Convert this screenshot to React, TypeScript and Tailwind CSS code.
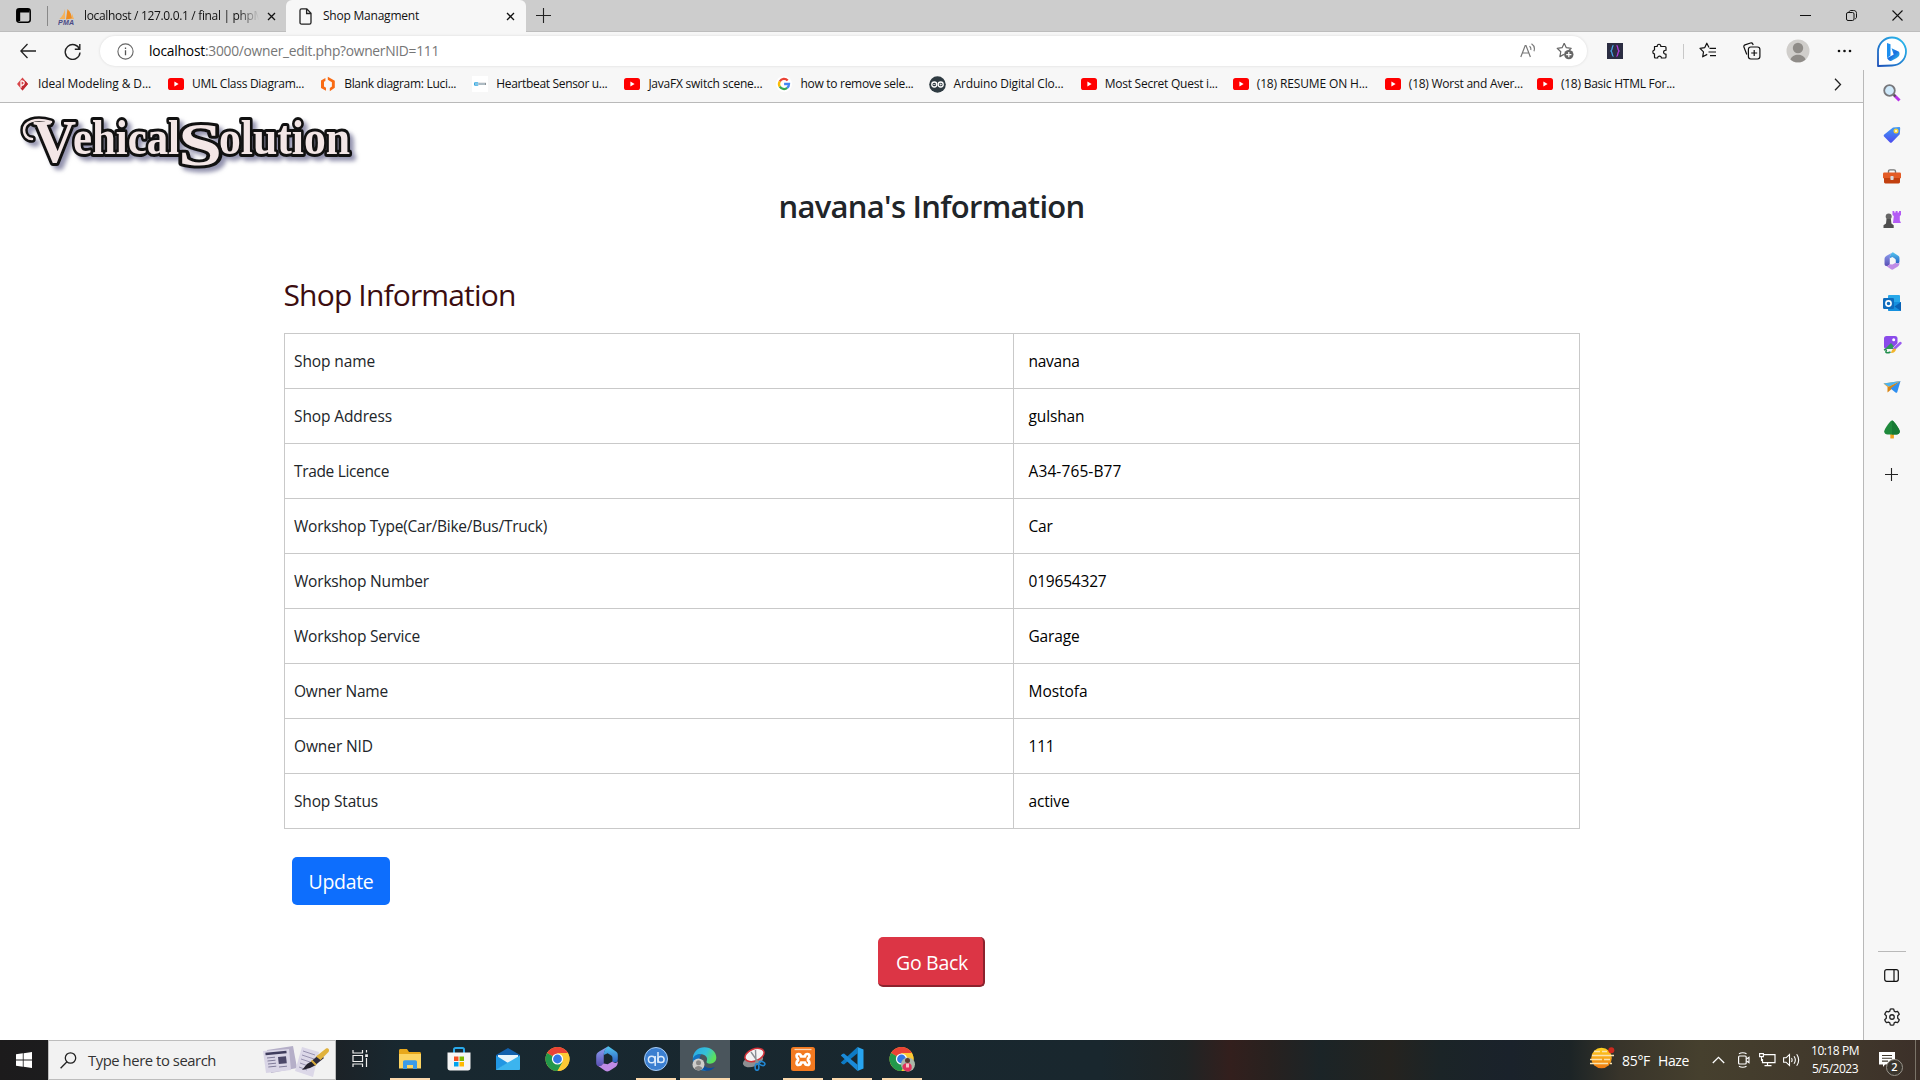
import React, { useLayoutEffect, useRef, useState } from 'react';

/* Single line of text tracked so that it fills exactly `w` pixels. */
function Fit({ w, children, className = '' }: { w: number; children: string; className?: string }) {
  const ref = useRef<HTMLSpanElement>(null);
  const [ls, setLs] = useState(0);
  useLayoutEffect(() => {
    if (ref.current) {
      const natural = ref.current.getBoundingClientRect().width;
      setLs((w - natural) / children.length);
    }
  }, []);
  return (
    <span ref={ref} className={'inline-block shrink-0 whitespace-pre ' + className} style={{ letterSpacing: ls }}>
      {children}
    </span>
  );
}

type SvgProps = { w: number; h?: number; vb?: string; className?: string; children: React.ReactNode };
function Svg({ w, h = w, vb, className = '', children }: SvgProps) {
  return (
    <svg width={w} height={h} viewBox={vb ?? `0 0 ${w} ${h}`} fill="none" className={'shrink-0 ' + className}>
      {children}
    </svg>
  );
}

/* ---------- Bookmark icons ---------- */
const YouTube = () => (
  <Svg w={16}>
    <rect x="0" y="2" width="16" height="12" rx="2.6" fill="#f00" />
    <path d="M6.4 5.6v4.8L10.6 8z" fill="#fff" />
  </Svg>
);
const Paradigm = () => (
  <Svg w={14} h={16}>
    <path d="M6.500 1.500 12 8l-5.500 6.500L1 8z" fill="#d8474b" />
    <path d="M9.500 5 12 8l-5.500 6.500-2-2.400z" fill="#c02a30" />
    <path d="M5 4.500v7.200M5 5c4.200-.6 4.200 4.200.4 4.200" stroke="#fff" strokeWidth="1.2" />
  </Svg>
);
const Lucid = () => (
  <Svg w={16}>
    <path d="M5.400 2v3L4 5.800v4.800l2 1.200v3L1 12V4.600z" fill="#f96b13" />
    <path d="M7.800 3.700V.8l7 4v7L9.800 15.300v-3.400l2.100-1.500V6.200z" fill="#f96b13" />
  </Svg>
);
const Heartbeat = () => (
  <Svg w={16}>
    <rect width="16" height="16" fill="#fff" />
    <rect x="2" y="6.300" width="4.500" height="3.400" rx="1" fill="#35a8e0" />
    <rect x="6.500" y="6.800" width="7.500" height="2.200" fill="#8b9297" />
    <path d="M3 8h10" stroke="#cfe3ee" />
  </Svg>
);
const GoogleG = () => (
  <Svg w={16}>
    <circle cx="8" cy="8" r="8" fill="#fff" />
    <g strokeWidth="2.3">
      <path d="M11.700 4.500A5 5 0 0 0 3.800 5.300" stroke="#ea4335" />
      <path d="M3.800 5.300a5 5 0 0 0 0 5.400" stroke="#fbbc05" />
      <path d="M3.800 10.700a5 5 0 0 0 7.400 1.200" stroke="#34a853" />
      <path d="M11.200 11.900A5 5 0 0 0 13 8H8.100" stroke="#4285f4" />
    </g>
  </Svg>
);
const Arduino = () => (
  <Svg w={17}>
    <circle cx="8.500" cy="8.500" r="8.300" fill="#2f3b42" />
    <circle cx="5.300" cy="8.500" r="2.500" stroke="#fff" strokeWidth="1.300" />
    <circle cx="11.700" cy="8.500" r="2.500" stroke="#fff" strokeWidth="1.300" />
    <path d="M4.200 8.500h2.200M10.600 8.500h2.200M11.700 7.400v2.200" stroke="#fff" strokeWidth=".7" />
  </Svg>
);

const bookmarks: [React.ReactNode, string, number][] = [
  [<Paradigm />, 'Ideal Modeling & D...', 113],
  [<YouTube />, 'UML Class Diagram...', 112],
  [<Lucid />, 'Blank diagram: Luci...', 112],
  [<Heartbeat />, 'Heartbeat Sensor u...', 111],
  [<YouTube />, 'JavaFX switch scene...', 114],
  [<GoogleG />, 'how to remove sele...', 113],
  [<Arduino />, 'Arduino Digital Clo...', 110],
  [<YouTube />, 'Most Secret Quest i...', 113],
  [<YouTube />, '(18) RESUME ON H...', 111],
  [<YouTube />, '(18) Worst and Aver...', 114],
  [<YouTube />, '(18) Basic HTML For...', 114],
];

/* ---------- Browser chrome ---------- */
function TabStrip() {
  return (
    <div className="flex h-8 shrink-0 bg-[#cdcdcd] text-[12px] text-[#111]">
      <div className="flex w-12 items-center border-b border-[#bdbdbd] pl-4">
        <Svg w={15} h={15}>
          <rect x=".8" y=".8" width="13.400" height="13.400" rx="2.400" stroke="#000" strokeWidth="1.500" />
          <path d="M1.500 1h12v3.600h-12zM1 2h3.200v11H1z" fill="#000" />
        </Svg>
        <div className="ml-4 h-5 w-px bg-[#888]" />
      </div>
      <div className="flex w-[238px] items-center border-b border-[#bdbdbd]">
        <Svg w={17} className="ml-[10px] mt-1">
          <path d="M7 0v10H1.500C4.500 7 6 4 7 0z" fill="#f5b35c" />
          <path d="M9.500 0c3 3 4 6 4.500 9.500L8 10.500z" fill="#f08c1e" />
          <path d="M14 4.500l2 5.500h-2z" fill="#f5b35c" />
          <text x="0" y="16" fontSize="7" fontWeight="700" fontStyle="italic" fontFamily="Liberation Sans" textLength="16" fill="#4a4a86">PMA</text>
        </Svg>
        <div className="ml-[9px] w-[175px] overflow-hidden [mask-image:linear-gradient(to_right,#000_88%,transparent)]">
          <Fit w={180}>localhost / 127.0.0.1 / final | phpM</Fit>
        </div>
        <Svg w={9} className="ml-2 mt-px">
          <path d="m1 1 7 7M8 1 1 8" stroke="#111" strokeWidth="1.300" />
        </Svg>
      </div>
      <div className="flex w-[240px] items-center rounded-t-md bg-[#f7f7f7]">
        <Svg w={13} h={17} className="ml-[13px]">
          <path d="M2.600.8h5.200L12 5.200v9.200c0 1-.6 1.800-1.600 1.800H2.600C1.600 16.200 1 15.400 1 14.400V2.600C1 1.600 1.600.8 2.600.8zM7.600 1v4.500H12" stroke="#222" strokeWidth="1.300" />
        </Svg>
        <Fit w={96} className="ml-[11px]">Shop Managment</Fit>
        <Svg w={9} className="ml-[87px] mt-px">
          <path d="m1 1 7 7M8 1 1 8" stroke="#111" strokeWidth="1.300" />
        </Svg>
      </div>
      <div className="flex flex-1 items-center border-b border-[#bdbdbd] pl-[10px]">
        <Svg w={15}>
          <path d="M7.500 0v15M0 7.500h15" stroke="#222" strokeWidth="1.100" />
        </Svg>
        <div className="flex-1" />
        <Svg w={11} className="mr-[35px]"><path d="M0 5.500h11" stroke="#111" /></Svg>
        <Svg w={11} className="mr-[35px]">
          <rect x=".5" y="2.500" width="7.500" height="8" rx="1.500" stroke="#111" />
          <path d="M3 2.200C3.200 1 4 .5 5 .5h2.500c2 0 3 1 3 3V7c0 1-.6 1.700-1.600 1.900" stroke="#111" />
        </Svg>
        <Svg w={11} className="mr-[17px]"><path d="m.5.5 10 10M10.500.5l-10 10" stroke="#111" strokeWidth="1.100" /></Svg>
      </div>
    </div>
  );
}

function AddressBar() {
  return (
    <div className="flex h-[38px] shrink-0 items-center bg-[#f7f7f7]">
      <Svg w={16} className="ml-5">
        <path d="M7.500 1 .8 8l6.700 7M1 8h15" stroke="#222" strokeWidth="1.300" />
      </Svg>
      <Svg w={17} className="ml-7">
        <path d="M15.600 6.500A7.400 7.400 0 1 0 16 9.500M15.800 1v5.200h-5" stroke="#222" strokeWidth="1.400" />
      </Svg>
      <div className="ml-[19px] flex h-[30px] w-[1487px] items-center rounded-full bg-white shadow-[0_0_3px_rgba(0,0,0,0.12)]">
        <Svg w={17} className="ml-[17px]">
          <circle cx="8.500" cy="8.500" r="7.600" stroke="#666" strokeWidth="1.100" />
          <path d="M8.500 7.200v5M8.500 4.600v1.300" stroke="#555" strokeWidth="1.300" />
        </Svg>
        <div className="ml-[15px] flex text-[13.800px] text-[#767676]">
          <Fit w={56} className="text-black">localhost</Fit>
          <Fit w={234}>:3000/owner_edit.php?ownerNID=111</Fit>
        </div>
        <div className="flex-1" />
        <Svg w={16}>
          <path d="m.8 14 4.400-11.500h.8L10.400 14M2.300 10h6.600" stroke="#777" strokeWidth="1.200" />
          <path d="M9.500 3.200c1.200.9 1.600 2.300 1.200 3.800M11.500.8c2.600 1.700 3.500 4.600 2.400 7.500" stroke="#777" strokeWidth="1.100" />
        </Svg>
        <Svg w={18} className="ml-5 mr-[13px]">
          <path d="m8.200 1.200 2.100 4.500 4.900.6-3.600 3.400M8.200 1.200 6.100 5.700l-4.900.6 3.600 3.400-.9 4.900 4-2.200" stroke="#666" strokeWidth="1.200" strokeLinejoin="round" />
          <circle cx="12.800" cy="12.600" r="4.700" fill="#666" />
          <path d="M12.800 10v5.200M10.200 12.600h5.200" stroke="#fff" strokeWidth="1.200" />
        </Svg>
      </div>
      <div className="ml-5 flex h-4 w-4 items-center justify-center bg-[#2b2d42]">
        <Svg w={14}>
          <path d="M5.500 1.500C3.800 1.500 4.600 6 3 7c1.600 1 .8 5.500 2.500 5.500" stroke="#4aa3e8" strokeWidth="1.300" />
          <path d="M8.500 1.500c1.700 0 .9 4.500 2.500 5.500-1.600 1-.8 5.500-2.500 5.500" stroke="#b13be0" strokeWidth="1.300" />
        </Svg>
      </div>
      <Svg w={17} className="ml-[29px]">
        <path d="M2.500 3.500h2.700c-.4-3 4-3 3.600 0H13c.6 0 1 .4 1 1v2.800c-3.200-.4-3.200 4.200 0 3.800V14c0 .6-.4 1-1 1H9.300c.5-2.400-4-2.400-3.600 0H3.500c-.6 0-1-.4-1-1v-3.200C.3 10.800.3 7 2.500 7z" stroke="#111" strokeWidth="1.200" strokeLinejoin="round" />
      </Svg>
      <div className="ml-[14px] h-[15px] w-px bg-[#c8c8c8]" />
      <Svg w={18} className="ml-[15px]">
        <path d="M10 5.500 7.800 1.200 5.800 5.600l-4.800.7 3.500 3.500-.8 5 4.500-2.400" stroke="#111" strokeWidth="1.200" strokeLinejoin="round" />
        <path d="M10.500 6.300H17M9.500 10H17M11 13.700h6" stroke="#111" strokeWidth="1.200" />
      </Svg>
      <Svg w={18} className="ml-[26px]">
        <path d="M3.800 12.500 1 5.200c-.4-1 0-1.900 1-2.300L7.500 1c1-.3 1.900.1 2.300 1l.4 1" stroke="#111" strokeWidth="1.200" />
        <rect x="5.400" y="5" width="11.500" height="12" rx="2.400" stroke="#111" strokeWidth="1.200" />
        <path d="M11.200 8v6M8.200 11h6" stroke="#111" strokeWidth="1.200" />
      </Svg>
      <Svg w={24} className="ml-[25px]">
        <circle cx="12" cy="12" r="11.500" fill="#d0cecb" />
        <circle cx="12" cy="9" r="5.200" fill="#8f8c88" />
        <path d="M4.500 20.500c1.500-6.500 13.500-6.500 15 0-4 3.800-11 3.800-15 0z" fill="#8f8c88" />
      </Svg>
      <Svg w={15} h={4} className="ml-[27px]">
        <circle cx="2" cy="2" r="1.300" fill="#111" /><circle cx="7.500" cy="2" r="1.300" fill="#111" /><circle cx="13" cy="2" r="1.300" fill="#111" />
      </Svg>
      <Svg w={30} h={32} className="ml-[25px] mt-px">
        <defs>
          <linearGradient id="bingRing" x1="0" y1="1" x2="1" y2="0"><stop stopColor="#1c50b8" /><stop offset="1" stopColor="#2bc0f0" /></linearGradient>
          <linearGradient id="bingB" x1="0" y1="0" x2="1" y2="1"><stop stopColor="#25b4f2" /><stop offset=".5" stopColor="#1b6ee0" /><stop offset="1" stopColor="#35d0e8" /></linearGradient>
        </defs>
        <path d="M1 30V15.500A14 14 0 1 1 15 29.500z" fill="#fff" stroke="url(#bingRing)" strokeWidth="1.800" strokeLinejoin="round" />
        <path d="m10 7 3.500 1.300v11.200L10 22z" fill="#1d8ff0" />
        <path d="m14.500 12.300 7.500 3.400c1.500 3.300-.6 5.200-2.300 6.200l-5.200 2.800c-1.500.6-3-.2-4.500-2.700l5.500-2.800 1.200-.8z" fill="url(#bingB)" />
      </Svg>
    </div>
  );
}

function BookmarksBar() {
  return (
    <div className="flex h-[33px] shrink-0 items-center border-b border-[#b9b9b9] bg-[#f7f7f7] pb-1 pl-4 text-[12px] text-[#111]">
      {bookmarks.map(([icon, label, w]) => (
        <div key={label} className="flex w-[152.100px] shrink-0 items-center gap-2">
          {icon}
          <Fit w={w}>{label}</Fit>
        </div>
      ))}
      <Svg w={8} h={13} className="ml-[145px] mt-px"><path d="m1 .8 5.500 5.700L1 12.200" stroke="#222" strokeWidth="1.300" /></Svg>
    </div>
  );
}

/* ---------- Edge sidebar ---------- */
const SearchIcon = () => (
  <Svg w={18}>
    <path d="m11 11 5.500 5.500" stroke="#b833e8" strokeWidth="3" />
    <path d="m10.500 10.500 2 2" stroke="#555" strokeWidth="2" />
    <circle cx="6.500" cy="6.500" r="5.300" fill="#cfe9fa" stroke="#77777b" strokeWidth="1.800" />
  </Svg>
);
const TagIcon = () => (
  <Svg w={18}>
    <defs><linearGradient id="tagG" x1="0" y1="0" x2="0" y2="1"><stop stopColor="#3f9bf5" /><stop offset="1" stopColor="#4d4bee" /></linearGradient></defs>
    <path d="M10 1.500 16 1c.8 0 1.200.5 1.200 1.200l-.4 6L9 16.200c-.8.800-1.600.800-2.300 0L1.300 10.800c-.8-.8-.8-1.600 0-2.300z" fill="url(#tagG)" />
    <circle cx="13" cy="5" r="2.500" fill="#f4d33c" /><circle cx="13" cy="5" r="1" fill="#fff" />
  </Svg>
);
const ToolboxIcon = () => (
  <Svg w={18}>
    <path d="M5.500 5V3.500c0-1 .6-1.600 1.500-1.600h4c1 0 1.500.6 1.500 1.600V5" stroke="#777" strokeWidth="1.400" />
    <rect y="4.500" width="18" height="6" rx="1.300" fill="#e35b26" />
    <path d="M1 10h16v4c0 .8-.6 1.400-1.400 1.400H2.400C1.600 15.400 1 14.800 1 14z" fill="#c2400f" />
    <rect x="7.400" y="8" width="3.200" height="4" rx=".8" fill="#d8dade" />
  </Svg>
);
const ChessIcon = () => (
  <Svg w={18}>
    <path d="M9.500 1h1.800v1.500h1.300V1h2v1.500H16V1h2v4l-1.200 1v4.500L18 13h-8l.8-7L9.500 5z" fill="#b45cf5" />
    <circle cx="5.700" cy="6.500" r="3" fill="#666" />
    <path d="M3.500 9h4.400l.5 4.500 2.300 1.800V18H.5v-2.700L3 13.500z" fill="#4f4f4f" />
  </Svg>
);
function M365({ s, id }: { s: number; id: string }) {
  return (
    <Svg w={s} vb="0 0 20 20">
      <defs>
        <linearGradient id={id + 'a'} x1="0" y1="0" x2="0" y2="1"><stop stopColor="#8fa4f4" /><stop offset="1" stopColor="#5a4fb4" /></linearGradient>
        <linearGradient id={id + 'b'} x1="0" y1="0" x2="0" y2="1"><stop stopColor="#52c8f0" /><stop offset="1" stopColor="#2f5fc4" /></linearGradient>
      </defs>
      <path d="M11 .2 4 4.200C2.400 5.200 1.700 6.200 1.700 8v5.200c0 2 2 3 3.800 2l2-1.200V7c0-2.500 1-4.800 3.500-6.800z" fill={`url(#${id}a)`} />
      <path d="M11 .2C8.500 2 7.500 4 7.500 7l3-1.500 2.500 1.600c.9.600 1.200 1.200 1.200 2.100V12c2.500 1.500 4.100.500 4.100-2V7c0-1.500-.6-2.300-1.700-3z" fill={`url(#${id}b)`} />
      <path d="m2.500 14.800 6 4.200c1.200.8 2.200.8 3.500 0l4.500-2.900c1.300-.9 1.800-2 1.800-4.600-1 2-2.600 2-4.100.5L10.500 14l-3-.5-2 1.700c-1 .5-2.200.300-3-.4z" fill="#c08be6" />
    </Svg>
  );
}
const OutlookIcon = () => (
  <Svg w={18}>
    <rect x="5" y="1" width="12" height="10" rx="1" fill="#28a8ea" />
    <path d="M5 8h13v8c0 .6-.4 1-1 1H6c-.6 0-1-.4-1-1z" fill="#1490df" />
    <path d="m18 8-6.500 4.500L18 17z" fill="#0a62b5" />
    <rect y="4" width="11" height="11" rx="1.200" fill="#0f6cbd" />
    <circle cx="5.500" cy="9.500" r="2.600" stroke="#fff" strokeWidth="1.600" />
  </Svg>
);
const DesignIcon = () => (
  <Svg w={19} h={18}>
    <rect x="1" y="0" width="13.500" height="13" rx="2.500" fill="#8a4bea" />
    <circle cx="10.700" cy="3.800" r="1.500" fill="#fff" />
    <path d="M2 13 8 7l5 6z" fill="#2d9a5b" />
    <path d="M1 14c2-1 3 0 2 1.500s2 1.800 4.500.5" stroke="#24914f" strokeWidth="1.500" />
    <path d="m11 13 7-6.500" stroke="#f7f7f7" strokeWidth="3.400" />
    <path d="m11 13 6.500-6" stroke="#9a5bf0" strokeWidth="2.400" strokeLinecap="round" />
    <path d="M8 17c.5-3 2-4.500 4-4.500S12.500 17.500 8 17z" fill="#f2b52c" />
  </Svg>
);
const SendIcon = () => (
  <Svg w={18}>
    <path d="M17.500 3 .5 5.500 4.500 9z" fill="#f0a22a" />
    <path d="M17.500 3 4.500 9v5.500l3-2.500z" fill="#d98614" />
    <path d="m17.500 3-10 7.500 5 4c.8.500 1.500.300 1.800-.6z" fill="#2f8ff0" />
    <path d="M.5 5.500 17.500 3 6 8.500z" fill="#4bb4f2" />
  </Svg>
);
const TreeIcon = () => (
  <Svg w={18} h={19}>
    <rect x="7.300" y="13" width="3.600" height="5.500" rx=".5" fill="#f0a21e" />
    <path d="M9 .5C10.500.5 16.800 9 16.800 11.500c0 2-1.600 3-3.300 3h-9c-1.700 0-3.300-1-3.300-3C1.200 9 7.500.5 9 .5z" fill="#1f8a3c" />
    <path d="M9 .5C10.500.5 16.800 9 16.800 11.500c0 2-1.600 3-3.300 3H9z" fill="#187a34" />
  </Svg>
);

function Sidebar() {
  const icons = [<SearchIcon />, <TagIcon />, <ToolboxIcon />, <ChessIcon />, <M365 s={18} id="side" />, <OutlookIcon />, <DesignIcon />, <SendIcon />, <TreeIcon />];
  return (
    <div className="flex w-[57px] shrink-0 flex-col items-center border-l border-[#b9b9b9] bg-[#f7f7f7]">
      <div className="mt-0.5 flex flex-col items-center">
        {icons.map((icon, i) => (
          <div key={i} className="flex h-[42px] items-center">{icon}</div>
        ))}
      </div>
      <Svg w={13} className="mr-px mt-[18px]"><path d="M6.500 0v13M0 6.500h13" stroke="#222" strokeWidth="1.100" /></Svg>
      <div className="flex-1" />
      <div className="h-px w-7 bg-[#b9b9b9]" />
      <Svg w={15} h={13} className="mr-px mt-[17px]">
        <rect x=".7" y=".7" width="13.600" height="11.600" rx="2" stroke="#111" strokeWidth="1.200" />
        <path d="M10 .7v11.600" stroke="#111" strokeWidth="1.200" />
      </Svg>
      <Svg w={18} vb="0 0 24 24" className="mb-[14px] mt-[26px]">
        <path d="M12 1.200c.9 0 1.700.1 2.300.3l.6 2.700 1.800 1 2.700-.8c1 1.200 1.800 2.500 2.300 4L19.600 10.300v3.400l2.100 1.900c-.5 1.500-1.300 2.800-2.300 4l-2.700-.8-1.800 1-.6 2.700a11 11 0 0 1-4.600 0l-.6-2.700-1.800-1-2.700.8c-1-1.200-1.800-2.500-2.300-4l2.100-1.900v-3.400L2.300 8.400c.5-1.500 1.300-2.800 2.300-4l2.700.8 1.800-1 .6-2.700c.7-.2 1.500-.3 2.300-.3z" stroke="#222" strokeWidth="1.700" strokeLinejoin="round" />
        <circle cx="12" cy="12" r="3" stroke="#222" strokeWidth="1.700" />
      </Svg>
    </div>
  );
}

/* ---------- Page ---------- */
const rows: [string, number, string, number][] = [
  ['Shop name', 81, 'navana', 51],
  ['Shop Address', 98, 'gulshan', 56],
  ['Trade Licence', 95, 'A34-765-B77', 93],
  ['Workshop Type(Car/Bike/Bus/Truck)', 253, 'Car', 24],
  ['Workshop Number', 135, '019654327', 78],
  ['Workshop Service', 126, 'Garage', 51],
  ['Owner Name', 94, 'Mostofa', 59],
  ['Owner NID', 79, '111', 26],
  ['Shop Status', 84, 'active', 41],
];

/* Wordmark: outlined, shadowed lettering with an oversized V and S. */
function Logo() {
  return (
    <Svg w={356} h={66} className="ml-[10px] mt-[10px] overflow-visible drop-shadow-[4px_4px_2px_rgba(60,60,110,0.55)]">
      <g fontFamily="Liberation Serif" fontWeight="700" fill="#f3e6e6" stroke="#111" strokeWidth="6" strokeLinejoin="round" strokeLinecap="round">
        <path d="M41 9C25 4 14 9 14 17c0 6 4 9 8 9" fill="none" strokeWidth="7.500" />
        <g className="[paint-order:stroke]">
          <text x="63" y="41" fontSize="49" textLength="107" lengthAdjust="spacingAndGlyphs">ehical</text>
          <text x="209" y="41" fontSize="49" textLength="131" lengthAdjust="spacingAndGlyphs">olution</text>
          <text transform="translate(23 49) scale(.98 1)" fontSize="61">V</text>
          <text transform="translate(168 52) scale(1.28 1)" fontSize="62">S</text>
        </g>
        <path d="M41 9C25 4 14 9 14 17c0 6 4 9 8 9" fill="none" stroke="#f3e6e6" strokeWidth="2.500" />
      </g>
    </Svg>
  );
}

function Page() {
  return (
    <main className="flex flex-1 flex-col bg-white text-[#212529]">
      <Logo />
      <h1 className="mt-[5px] flex h-11 items-center justify-center text-[31px] font-semibold">
        <Fit w={306}>navana's Information</Fit>
      </h1>
      <section className="mx-auto mt-11 w-[1296px]">
        <h2 className="flex h-11 items-center text-[30px] text-[#3c0d10]">
          <Fit w={232}>Shop Information</Fit>
        </h2>
        <div className="mt-[17px] border-l border-t border-[#c9c9c9] text-[15.500px]">
          {rows.map(([label, lw, value, vw]) => (
            <div key={label} className="flex h-[55px] border-b border-[#c9c9c9]">
              <div className="flex w-[729px] items-center border-r border-[#c9c9c9] pl-[9.500px] pt-0.5"><Fit w={lw}>{label}</Fit></div>
              <div className="flex flex-1 items-center border-r border-[#c9c9c9] pl-[15px] pt-0.5 text-black"><Fit w={vw}>{value}</Fit></div>
            </div>
          ))}
        </div>
        <button className="ml-2 mt-7 flex h-12 w-[98px] items-center justify-center rounded-[5px] bg-[#0d6efd] pl-px pt-px text-[19.500px] text-white">
          <Fit w={65}>Update</Fit>
        </button>
      </section>
      <button className="mx-auto mt-8 flex h-[50px] w-[107px] items-center justify-center rounded-[5px] border-b-2 border-r-2 border-[#8c222d] bg-[#dc3545] pl-[3px] pt-1 text-[19.500px] text-white">
        <Fit w={72}>Go Back</Fit>
      </button>
    </main>
  );
}

/* ---------- Taskbar ---------- */
const Explorer = () => (
  <Svg w={22} h={24}>
    <path d="M0 3.500C0 2.600.6 2 1.500 2H8l2 3h10.500c.9 0 1.500.6 1.500 1.500V20H0z" fill="#e8a81c" />
    <path d="M0 7h22v14.500H0z" fill="#fcd462" />
    <path d="M4 22v-7c0-1 .7-1.700 1.700-1.700h10.600c1 0 1.700.7 1.700 1.700v7h-4v-4H8v4z" fill="#3b9be8" />
  </Svg>
);
const Store = () => (
  <Svg w={24}>
    <path d="M7 6V2.500C7 1.600 7.600 1 8.500 1h7c.9 0 1.500.6 1.500 1.500V6" stroke="#29a9ea" strokeWidth="2" />
    <path d="M.5 5.500h23V21c0 1.500-1 2.500-2.500 2.500H3C1.500 23.500.5 22.500.5 21z" fill="#f5f5f5" />
    <path d="M7 9.500h4.500V14H7z" fill="#f25022" /><path d="M12.500 9.500H17V14h-4.500z" fill="#7fba00" />
    <path d="M7 15h4.500v4.500H7z" fill="#00a4ef" /><path d="M12.500 15H17v4.500h-4.500z" fill="#ffb900" />
  </Svg>
);
const Mail = () => (
  <Svg w={24}>
    <path d="M0 8 12 1l12 7v6H0z" fill="#1360ac" />
    <path d="M2 8h20v8H2z" fill="#e8f4fb" />
    <path d="M0 8.500 12 16 0 23z" fill="#2196e3" />
    <path d="m24 8.500-24 14c.2.400.6.500 1 .5h22c.6 0 1-.4 1-1z" fill="#3cb4ee" />
  </Svg>
);
function Chrome({ badge = false }: { badge?: boolean }) {
  return (
    <Svg w={26} h={25} vb="0 0 26 25" className={badge ? '' : 'ml-0.5'}>
      <circle cx="12.500" cy="12" r="12" fill="#fcc934" />
      <path d="M12.500 12 2.100 6A12 12 0 0 1 22.900 6z" fill="#ea4335" />
      <path d="M2.100 6A12 12 0 0 0 12.500 24l5.200-9L12.500 12z" fill="#23984b" />
      <path d="M22.900 6H12.500v6l5.200 3-5.200 9A12 12 0 0 0 22.900 6z" fill="#fcc934" />
      <circle cx="12.500" cy="12" r="5.600" fill="#fff" /><circle cx="12.500" cy="12" r="4.400" fill="#3478e5" />
      {badge && (
        <>
          <circle cx="19" cy="17.500" r="7" fill="#a9b7a8" />
          <circle cx="18.500" cy="13.500" r="2.500" fill="#5b3a33" />
          <path d="M13.500 19c1-3.500 8-4.500 9-.5s-1.500 6-3.500 6-6-2-5.500-5.500z" fill="#e0315c" />
          <path d="M17 16.500h3v4h-3z" fill="#f4c3c3" />
        </>
      )}
    </Svg>
  );
}
const QB = () => (
  <Svg w={24}>
    <circle cx="12" cy="12" r="11.500" fill="#3b7fd0" stroke="#a9cdf5" />
    <g stroke="#dcebfb" strokeWidth="1.500">
      <circle cx="7.700" cy="12.500" r="3.300" /><path d="M11.200 9v10M14 5v11" /><circle cx="17" cy="12.500" r="3.100" />
    </g>
  </Svg>
);
const EdgeIcon = () => (
  <Svg w={25} h={24}>
    <defs>
      <linearGradient id="edgeA" x1="0" y1="0" x2="1" y2=".4"><stop stopColor="#2aa8e8" /><stop offset=".6" stopColor="#35c1d8" /><stop offset="1" stopColor="#5be05c" /></linearGradient>
    </defs>
    <path d="M.8 12C.8 5 6 .3 12.500.3S24.300 5 24.300 10.500c0 4-3 6.200-6.300 6.200-2.700 0-3.800-1-3.400-2.200.8-1.700 1-4.200-1.500-6C9.500 6 3 7 .8 12z" fill="url(#edgeA)" />
    <path d="M.8 12C2 8 6 6.500 9.500 7.500 6 10 6.500 20 15 23.500 7 25 0 19 .8 12z" fill="#1273c4" />
    <path d="M9.500 9.500C7.500 14 11 21 18 21c2.500 0 4.500-1.300 4.800-1-2 2.700-5 4-8.500 3.700C7.500 22 6 14 9.500 9.500z" fill="#0d4e9c" />
    <circle cx="6.500" cy="17.500" r="6" fill="#cfcdca" /><circle cx="6.500" cy="15.800" r="2.500" fill="#8a8886" />
    <path d="M2.500 21.500c1-3.500 7-3.500 8 0-2 2.400-6 2.400-8 0z" fill="#8a8886" />
  </Svg>
);
const Snip = () => (
  <Svg w={24}>
    <ellipse cx="11" cy="14" rx="10.500" ry="5.500" fill="#8d8f92" transform="rotate(-20 11 14)" />
    <ellipse cx="12.500" cy="8" rx="10" ry="6" fill="#f4f4f4" stroke="#d3323a" strokeWidth="1.500" transform="rotate(-22 12.500 8)" />
    <path d="m9 5 7 10M13.500 3 14 15" stroke="#8a8f94" strokeWidth="1.400" />
    <ellipse cx="15" cy="20" rx="1.900" ry="3.300" stroke="#2185d0" strokeWidth="1.600" />
    <ellipse cx="20" cy="16.500" rx="3" ry="1.900" stroke="#2185d0" strokeWidth="1.600" transform="rotate(20 20 16.500)" />
  </Svg>
);
const Xampp = () => (
  <Svg w={24}>
    <rect width="24" height="24" rx="2.500" fill="#f37a20" />
    <path d="M3.500 2.500h17" stroke="#fbd5b5" strokeWidth="1.300" />
    <path d="M7.500 7C5 7 5 10.500 7 11.500v2C5 14.500 5 18 7.500 18S10 15.500 10 15.500h4s0 2.500 2.500 2.500 2.500-3.500.5-4.500v-2c2-1 2-4.500-.5-4.500S14 9.500 14 9.500h-4S10 7 7.500 7z" stroke="#fff" strokeWidth="2.700" strokeLinejoin="round" />
  </Svg>
);
const VSCode = () => (
  <Svg w={24}>
    <path d="M17.500 0v6.300L4 17.500l-1.700-.6L.8 15.500 17.500 0z" fill="#0d7ac4" />
    <path d="M17.500 24v-6.300L4 6.500l-1.700.6L.8 8.500 17.500 24z" fill="#1a8ad8" />
    <path d="m17.500 0 6 2.500v19l-6 2.500z" fill="#27a4f0" />
  </Svg>
);
const TaskView = () => (
  <Svg w={17} className="mb-px">
    <path d="M1 0v3h9.500V0M1 17v-3h9.500v3M1 5.500h9.500v6H1zM14.500 0v2.500M14.500 8v9" stroke="#eee" strokeWidth="1.200" />
    <path d="M13.200 4.300h2.700V7h-2.700z" fill="#eee" />
  </Svg>
);

const apps: { icon: React.ReactNode; open?: boolean; active?: boolean }[] = [
  { icon: <TaskView /> },
  { icon: <Explorer />, open: true },
  { icon: <Store /> },
  { icon: <Mail /> },
  { icon: <Chrome /> },
  { icon: <M365 s={26} id="task" /> },
  { icon: <QB />, open: true },
  { icon: <EdgeIcon />, open: true, active: true },
  { icon: <Snip /> },
  { icon: <Xampp />, open: true },
  { icon: <VSCode />, open: true },
  { icon: <Chrome badge />, open: true },
];

function Taskbar() {
  return (
    <div className="flex h-10 shrink-0 bg-[linear-gradient(to_right,#1c1b1c_0px,#1c2227_336px,#182830_400px,#19272e_1100px,#1f2425_1185px,#331f1d_1230px,#28211f_1270px,#1b2427_1320px,#25231f_1390px,#1b2427_1440px,#1a222b_1510px,#1c2426_1570px,#38342a_1620px,#46402e_1700px,#40372b_1850px,#3c3029_1920px)] text-white">
      <div className="flex w-12 items-center justify-center">
        <Svg w={16}>
          <path d="M0 2.300 6.800 1.300v6.200H0zM7.600 1.200 16 0v7.500H7.600zM0 8.400h6.800v6.300L0 13.700zM7.600 8.400H16V16l-8.400-1.200z" fill="#fff" />
        </Svg>
      </div>
      <div className="flex w-72 items-center border border-[#bdbdbd] bg-[#f2f2f2]">
        <Svg w={17} className="ml-[11px]">
          <circle cx="10.500" cy="6" r="5.200" stroke="#222" strokeWidth="1.300" /><path d="M7 9.800.6 16.200" stroke="#222" strokeWidth="1.300" />
        </Svg>
        <Fit w={128} className="ml-[11px] text-[14.800px] text-[#333]">Type here to search</Fit>
        <Svg w={70} h={38} className="ml-[46px]">
          <path d="m5 9 26-4 4 22-26 5z" fill="#b5afc8" />
          <path d="m1 10 26-2 2 21-25 3z" fill="#d9d5e6" />
          <path d="m3.500 13 21-2" stroke="#3f3c5c" strokeWidth="2.500" />
          <path d="m5 17 8-.8M5.500 20l8-.8M6 23l8-.8M6.300 26l8-.8" stroke="#807b99" />
          <path d="m16 16 8-.8.800 7-8 .8z" fill="#4b4768" /><path d="m17 26 8-.8" stroke="#807b99" />
          <path d="m40 6 17 5-6 25-18-6z" fill="#dcd8e8" />
          <path d="m41 10 12 4M40 14l12 4M39 18l9 3M38 22l8 3M37 26l8 3" stroke="#8f8aa8" strokeWidth=".9" />
          <path d="m50 20 4 4-6 3-8 2 5-6z" fill="#25232e" />
          <path d="m50 19.500 8-6.500 4 4-8 6.500z" fill="#2f2c3c" />
          <path d="m54 15.500 10-8c2-1 4 1 2.500 3.500L58.500 19z" fill="#e0b23c" />
          <path d="m49.500 19.500 4.500 4.500" stroke="#d8ab3a" strokeWidth="1.900" />
        </Svg>
      </div>
      {apps.map(({ icon, open, active }, i) => (
        <div key={i} className={'flex w-[49.200px] shrink-0 flex-col items-center ' + (active ? 'bg-[#4a555c]' : '')}>
          <div className="flex flex-1 items-center">{icon}</div>
          <div className={'h-0.5 ' + (open ? 'bg-[#fbd9ad] ' : '') + (active ? 'w-full' : 'w-10')} />
        </div>
      ))}
      <div className="flex-1" />
      <Svg w={25} h={22} className="mr-[7px] mt-[7px]">
        <defs><linearGradient id="sun" x1="0" y1="0" x2="0" y2="1"><stop stopColor="#ffd21f" /><stop offset="1" stopColor="#f07a12" /></linearGradient></defs>
        <circle cx="11.500" cy="11" r="10.300" fill="url(#sun)" />
        <path d="M4 4.500h6M12 4.500h5M2 8.500h22M0 12.500h12M14 12.500h6M0 16.500h18M20 16.500h2" stroke="#f9e3b0" strokeWidth="1.700" />
        <circle cx="21.300" cy="3.200" r="3" fill="#cc2a1e" />
      </Svg>
      <div className="flex items-center text-[14px]">
        <Fit w={28}>85°F</Fit>
        <Fit w={31} className="ml-2">Haze</Fit>
      </div>
      <Svg w={13} h={8} className="ml-[23px] mt-4"><path d="m.8 7 5.700-5.700L12.200 7" stroke="#fff" strokeWidth="1.300" /></Svg>
      <Svg w={12} h={16} className="ml-[13px] mt-3">
        <rect x=".6" y="4" width="7.600" height="8" rx="1" stroke="#fff" strokeWidth="1.200" />
        <path d="m8.500 7 2.500-1.700v5.400L8.500 9M1 1.800c2-1.400 5.500-1.400 7.500 0M1 14.200c2 1.400 5.500 1.400 7.500 0" stroke="#fff" strokeWidth="1.100" />
      </Svg>
      <Svg w={17} h={15} className="ml-[9px] mt-3">
        <path d="M5 2.600h11v8H3.500V7M8.500 10.600v3M5.500 13.600h7" stroke="#fff" strokeWidth="1.200" />
        <path d="M.6 1.600h3.800v3H.6zM2.500 4.600V9" stroke="#fff" strokeWidth="1.100" />
      </Svg>
      <Svg w={17} h={14} className="ml-[7px] mt-[13px]">
        <path d="M.6 4.800h2.400L6.500 1.500v11L3 9.200H.6z" stroke="#fff" strokeWidth="1.100" />
        <path d="M8.500 5c.8 1.300.8 2.700 0 4M11 3.200c1.700 2.400 1.700 5.200 0 7.600M13.700 1.300c2.500 3.600 2.500 7.800 0 11.400" stroke="#fff" strokeWidth="1.100" />
      </Svg>
      <div className="ml-[11px] flex w-12 flex-col items-center pt-0.5 text-[12px] leading-[18px]">
        <Fit w={48}>10:18 PM</Fit>
        <Fit w={46}>5/5/2023</Fit>
      </div>
      <div className="relative ml-5 mt-3 h-7 w-6">
        <Svg w={16} h={15}>
          <path d="M0 0h16v12.500H6L4 15v-2.500H0z" fill="#fff" /><path d="M3 3.500h10M3 6.300h10M3 9.100h6" stroke="#3f382c" strokeWidth="1.100" />
        </Svg>
        <div className="absolute left-[7px] top-[7px] flex h-[17px] w-[17px] items-center justify-center rounded-full border border-[#9a958c] bg-[#3a352d] text-[11px] font-semibold">2</div>
      </div>
      <div className="ml-3 mr-1 w-px bg-[#7a7368]" />
    </div>
  );
}

export default function App() {
  return (
    <div className="flex h-[1080px] w-[1920px] flex-col overflow-hidden bg-white font-['Open_Sans','Noto_Sans',sans-serif]">
      <TabStrip />
      <AddressBar />
      <div className="flex min-h-0 flex-1">
        <div className="flex min-w-0 flex-1 flex-col">
          <BookmarksBar />
          <Page />
        </div>
        <Sidebar />
      </div>
      <Taskbar />
    </div>
  );
}
